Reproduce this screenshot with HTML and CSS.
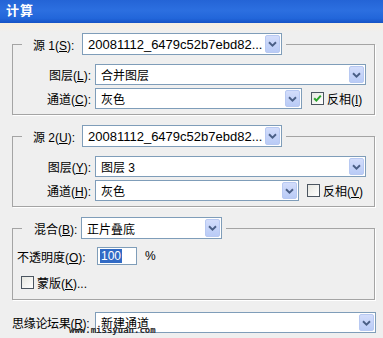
FILE: index.html
```html
<!DOCTYPE html>
<html>
<head>
<meta charset="utf-8">
<link rel="stylesheet" href="styles.css">
</head>
<body>
<div class="title">计算</div>
<div class="main">
  <fieldset class="grp">
    <legend><span class="lgl">源 1(<u>S</u>):</span><div class="combo lcombo w200"><span class="txt fn">20081112_6479c52b7ebd82...</span><span class="btn"><svg width="9" height="6" viewBox="0 0 9 6"><path d="M1 1.2 L4.5 4.6 L8 1.2" fill="none" stroke="#4a5f86" stroke-width="1.9"/></svg></span></div></legend>
    <div class="row first"><span class="rl">图层(<u>L</u>):</span><div class="combo grow"><span class="txt">合并图层</span><span class="btn"><svg width="9" height="6" viewBox="0 0 9 6"><path d="M1 1.2 L4.5 4.6 L8 1.2" fill="none" stroke="#4a5f86" stroke-width="1.9"/></svg></span></div></div>
    <div class="row"><span class="rl">通道(<u>C</u>):</span><div class="combo w207"><span class="txt">灰色</span><span class="btn"><svg width="9" height="6" viewBox="0 0 9 6"><path d="M1 1.2 L4.5 4.6 L8 1.2" fill="none" stroke="#4a5f86" stroke-width="1.9"/></svg></span></div><span class="cb cb1"><svg width="11" height="11" viewBox="0 0 11 11"><path d="M2.2 5.2 L4.4 7.6 L8.8 2.6" fill="none" stroke="#2aa32a" stroke-width="2"/></svg></span><span class="cbl">反相(<u>I</u>)</span></div>
  </fieldset>

  <fieldset class="grp">
    <legend><span class="lgl">源 2(<u>U</u>):</span><div class="combo lcombo w200"><span class="txt fn">20081112_6479c52b7ebd82...</span><span class="btn"><svg width="9" height="6" viewBox="0 0 9 6"><path d="M1 1.2 L4.5 4.6 L8 1.2" fill="none" stroke="#4a5f86" stroke-width="1.9"/></svg></span></div></legend>
    <div class="row first"><span class="rl">图层(<u>Y</u>):</span><div class="combo grow"><span class="txt">图层 3</span><span class="btn"><svg width="9" height="6" viewBox="0 0 9 6"><path d="M1 1.2 L4.5 4.6 L8 1.2" fill="none" stroke="#4a5f86" stroke-width="1.9"/></svg></span></div></div>
    <div class="row"><span class="rl">通道(<u>H</u>):</span><div class="combo w204"><span class="txt">灰色</span><span class="btn"><svg width="9" height="6" viewBox="0 0 9 6"><path d="M1 1.2 L4.5 4.6 L8 1.2" fill="none" stroke="#4a5f86" stroke-width="1.9"/></svg></span></div><span class="cb cb2"></span><span class="cbl">反相(<u>V</u>)</span></div>
  </fieldset>

  <fieldset class="grp g3">
    <legend><span class="lgl lgl3">混合(<u>B</u>):</span><div class="combo lcombo w141"><span class="txt">正片叠底</span><span class="btn"><svg width="9" height="6" viewBox="0 0 9 6"><path d="M1 1.2 L4.5 4.6 L8 1.2" fill="none" stroke="#4a5f86" stroke-width="1.9"/></svg></span></div></legend>
    <div class="orow"><span class="ol">不透明度(<u>O</u>):</span><div class="inp"><span class="sel">100</span></div><span class="pct">%</span></div>
    <div class="mrow"><span class="cb"></span><span class="cbl">蒙版(<u>K</u>)...</span></div>
  </fieldset>

  <div class="brow">
    <span class="bl">思缘论坛果(<u>R</u>):</span>
    <div class="combo grow"><span class="txt">新建通道</span><span class="btn"><svg width="9" height="6" viewBox="0 0 9 6"><path d="M1 1.2 L4.5 4.6 L8 1.2" fill="none" stroke="#4a5f86" stroke-width="1.9"/></svg></span></div>
    <span class="wm">www.missyuan.com</span>
  </div>
</div>
</body>
</html>
```

FILE: styles.css
```css
* { box-sizing: border-box; }
html, body { margin: 0; padding: 0; }
body {
  width: 383px;
  height: 338px;
  overflow: hidden;
  font-family: "Liberation Sans", "Noto Sans CJK SC", sans-serif;
  font-size: 12px;
  color: #000;
  background: #efefef;
}
u { text-decoration: underline; text-underline-offset: 1px; }
.title {
  height: 23px;
  background: linear-gradient(#2464d6, #2c6fe0 45%, #2266da 80%, #1652c4);
  color: #fff;
  font-weight: bold;
  font-size: 13px;
  line-height: 22px;
  padding-left: 6px;
  letter-spacing: 1px;
}
.main {
  height: 315px;
  padding: 10px 8px 0 12px;
  background: linear-gradient(#f6eee0, #efefef 9px);
}
.grp {
  margin: 0 0 10px 0;
  padding: 0 8px 5px 0;
  border: 1px solid #a4a4a4;
  box-shadow: 1px 1px 0 #fff;
  min-width: 0;
}
.grp legend {
  margin-left: 9px;
  padding: 0 4px 0 11px;
  display: flex;
  align-items: center;
}
.lgl { width: 49px; white-space: nowrap; }
.lgl3 { width: 48px; padding-left: 1px; }
.combo {
  height: 21px;
  border: 1px solid #7f9db9;
  background: #fff;
  display: flex;
  align-items: center;
}
.lcombo { height: 22px; }
.w200 { width: 200px; }
.w207 { width: 207px; }
.w204 { width: 204px; }
.w141 { width: 141px; }
.grow { flex: 1; }
.combo .txt {
  flex: 1;
  padding-left: 5px;
  white-space: nowrap;
  overflow: hidden;
}
.combo .fn { font-size: 13px; }
.btn {
  width: 15px;
  align-self: stretch;
  margin: 1px;
  background: linear-gradient(#d3ddfb, #b9cbf6);
  border: 1px solid #b8c9f2;
  border-radius: 2px;
  display: flex;
  align-items: center;
  justify-content: center;
}
.row { display: flex; align-items: center; margin-top: 3px; }
.row.first { margin-top: 9px; }
.rl { width: 82px; padding-right: 4px; text-align: right; white-space: nowrap; }
.cb {
  width: 13px;
  height: 13px;
  border: 1px solid #4b5560;
  background: linear-gradient(135deg, #e6e6e0, #fff);
  display: flex;
  align-items: center;
  justify-content: center;
}
.cb1 { margin-left: 9px; }
.cb2 { margin-left: 8px; }
.cbl { margin-left: 3px; white-space: nowrap; }
.g3 { padding-bottom: 8px; margin-bottom: 12px; }
.orow { display: flex; align-items: center; margin-top: 8px; }
.ol { width: 84px; padding-left: 4px; white-space: nowrap; }
.inp {
  width: 40px;
  height: 18px;
  border: 1px solid #7f9db9;
  background: #fff;
  display: flex;
  align-items: center;
  padding-left: 2px;
}
.sel { background: #316ac5; color: #fff; line-height: 14px; padding: 0 1px; }
.pct { margin-left: 8px; }
.mrow { display: flex; align-items: center; margin-top: 9px; padding-left: 8px; }
.brow {
  position: relative;
  display: flex;
  align-items: center;
  margin-right: -1px;
}
.bl { width: 83px; white-space: nowrap; letter-spacing: -0.3px; }
.wm {
  position: absolute;
  left: 57px;
  top: 13px;
  font-family: "DejaVu Sans Mono", monospace;
  font-size: 9px;
  font-weight: bold;
  color: #2a2a2a;
  letter-spacing: 0;
}
```
